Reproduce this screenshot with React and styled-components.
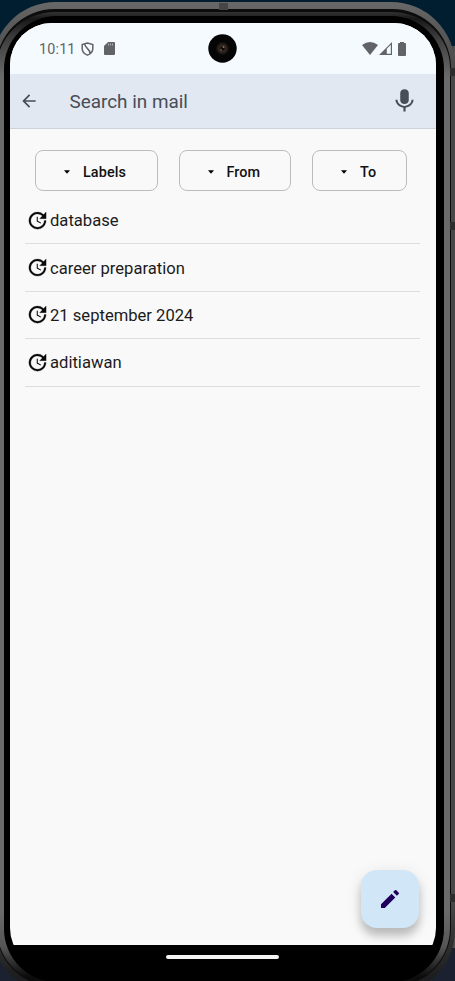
import React from "react";
import styled, { createGlobalStyle } from "styled-components";

const Global = createGlobalStyle`
  * { box-sizing: border-box; }
  body { margin: 0; background: #011e31; font-family: Roboto, "Liberation Sans", sans-serif; overflow: hidden; }
`;

const Stage = styled.main`
  position: relative;
  width: 455px;
  height: 981px;
  overflow: hidden;
  background: linear-gradient(#011e31 0, #011e31 100px, #1c2131 900px);
`;

const SideRail = styled.div`
  position: absolute;
  right: 0;
  top: 46px;
  width: 4px;
  height: 902px;
  background: linear-gradient(90deg, #3c3c3c, #555);
`;

const SideKey = styled.div`
  position: absolute;
  right: 0;
  top: ${(p) => p.$top}px;
  width: 5px;
  height: 8px;
  background: #2c2c2c;
`;

const Shell = styled.div`
  position: absolute;
  top: 2px;
  left: -8px;
  width: 463px;
  height: 992px;
  border-radius: 64px;
  padding: 21px 0 0 18px;
  background: linear-gradient(#686868 0, #5c5c5c 20px, #484848 70px, #484848 900px, #1d1d1d 975px);
`;

const Rim = styled.div`
  position: absolute;
  inset: 7px 4px 7px 4px;
  border: 1.5px solid #0c0c0c;
  border-top-width: 3px;
  border-radius: 59px;
  background: linear-gradient(#333 0, #181818 7px, #3c3c3c 25px, #6a6a6a 65px, #6a6a6a 900px, #555 935px, #0b0b0b 965px);
`;

const Bezel = styled.div`
  position: absolute;
  inset: 14px 11px 12px 12px;
  border-radius: 53px;
  background: #000;
`;

const AntennaBand = styled.div`
  position: absolute;
  top: 1px;
  left: 227px;
  width: 9px;
  height: 7px;
  background: #464646;
`;

const Screen = styled.div`
  position: relative;
  display: flex;
  flex-direction: column;
  width: 426px;
  height: 922px;
  overflow: hidden;
  clip-path: inset(0 0 -25px 0 round 42px);
  background: #f9f9f9;
`;

const StatusBar = styled.header`
  display: flex;
  align-items: center;
  height: 51px;
  padding: 0 29px;
  background: #f5faff;
  color: #626367;
`;

const Clock = styled.span`
  width: 42px;
  font-size: 14.3px;
  letter-spacing: 0.2px;
  line-height: 20px;
`;

const StatusGroup = styled.div`
  display: flex;
  align-items: center;
  gap: ${(p) => p.$gap}px;
  margin-left: ${(p) => (p.$end ? "auto" : "0")};
`;

const Camera = styled.svg`
  position: absolute;
  top: 11px;
  left: 198px;
`;

const SearchBar = styled.div`
  display: flex;
  align-items: center;
  height: 55px;
  padding: 0 16px 0 9px;
  background: #e1e8f2;
  border-bottom: 1px solid #cdd1d8;
  color: #484d57;
`;

const SearchText = styled.span`
  flex: 1;
  margin-left: 30.5px;
  padding-top: 2px;
  font-size: 18.9px;
  line-height: 24px;
`;

const Filters = styled.div`
  display: flex;
  gap: 21px;
  padding: 21px 25px 0;
`;

const Chip = styled.button`
  display: flex;
  flex: none;
  align-items: center;
  width: ${(p) => p.$width}px;
  height: 41px;
  padding: 4px 0 0 28px;
  gap: 13px;
  border: 1px solid #bdbdbd;
  border-radius: 8px;
  background: transparent;
  color: #111;
  font: 500 14.4px/20px Roboto, sans-serif;
  letter-spacing: 0.1px;
`;

const Caret = styled.svg`
  flex: none;
  margin-top: -1px;
`;

const History = styled.ul`
  display: flex;
  flex-direction: column;
  margin: 6px 16px 0 15px;
  padding: 0;
  list-style: none;
`;

const HistoryRow = styled.li`
  display: flex;
  align-items: center;
  height: 47.4px;
  padding-left: 1px;
  gap: 1px;
  border-bottom: 1px solid #dedede;
  color: #1b1b1b;
  font-size: 16.6px;
  line-height: 20px;
`;

const RowIcon = styled.svg`
  flex: none;
  color: #0a0a0a;
  stroke: currentColor;
  stroke-width: 0.25px;
`;

const RowLabel = styled.span`
  padding-top: 2px;
`;

const Compose = styled.button`
  position: absolute;
  right: 17px;
  bottom: 17px;
  display: grid;
  place-items: center;
  width: 58px;
  height: 58px;
  padding: 0;
  border: 0;
  border-radius: 16px;
  background: #d1e6f6;
  color: #21005d;
  box-shadow: 0 8px 9px rgba(0, 0, 0, 0.2), 0 3px 16px rgba(0, 0, 0, 0.1);
`;

const HomeBar = styled.div`
  position: relative;
  width: 113px;
  height: 4px;
  margin: 10px 0 0 156px;
  border-radius: 2px;
  background: #f4f4f4;
`;

const paths = {
  back: "M20 11H7.83l5.59-5.59L12 4l-8 8 8 8 1.41-1.41L7.83 13H20v-2z",
  mic: "M12 14.6c1.9 0 3.3-1.34 3.3-3.2V5c0-1.76-1.4-3.1-3.3-3.1S8.7 3.24 8.7 5v6.4c0 1.86 1.4 3.2 3.3 3.2zm5.4-3.6c0 3-2.6 5.2-5.4 5.2S6.6 14 6.6 11H5c0 3.41 2.72 6.23 6.15 6.72V21h1.7v-3.28c3.43-.48 6.15-3.3 6.15-6.72h-1.6z",
  update: "M21 10.12h-6.78l2.74-2.82c-2.73-2.7-7.15-2.8-9.88-.1-2.73 2.71-2.73 7.08 0 9.79s7.15 2.71 9.88 0C18.32 15.65 19 14.08 19 12.1h2c0 1.98-.88 4.55-2.64 6.29-3.51 3.48-9.21 3.48-12.72 0-3.5-3.47-3.53-9.11-.02-12.58s9.14-3.47 12.65 0L21 3v7.12z",
  hands: "M12.3 8v4.25l3.5 2.08-.5.9L11.2 13V8h1.1z",
  pencil: "M3 17.25V21h3.75L17.3 10.45l-3.75-3.75L3 17.25zM20.71 7.04a1 1 0 0 0 0-1.41l-2.34-2.34a1 1 0 0 0-1.41 0l-1.83 1.83 3.75 3.75 1.83-1.83z",
};

const filters = [
  { label: "Labels", width: 122.5 },
  { label: "From", width: 112.5 },
  { label: "To", width: 95 },
];
const searches = ["database", "career preparation", "21 september 2024", "aditiawan"];

export default function App() {
  return (
    <Stage>
      <Global />
      <SideRail />
      <Shell>
        <Rim />
        <Bezel />
        <AntennaBand />
        <Screen>
          <StatusBar>
            <Clock>10:11</Clock>
            <StatusGroup $gap={10}>
              <svg width="13" height="14" viewBox="0 0 13 14" fill="none" stroke="currentColor" strokeWidth="1.5">
                <path d="M6.5 1 1.2 2.6v3.8c0 3.2 2.2 5.5 5.3 6.7 3.1-1.2 5.3-3.5 5.3-6.7V2.6zM3.8 2.3c0 3.7 5.3 4.6 5.3 9" />
              </svg>
              <svg width="11" height="13" viewBox="0 0 11 13" fill="currentColor">
                <path d="M4 0h6q1 0 1 1v11q0 1-1 1H1q-1 0-1-1V4z" />
                <path d="M4.5 1.5v2m2-2v2m2-2v2" stroke="#b4b6ba" strokeWidth="0.9" />
              </svg>
            </StatusGroup>
            <StatusGroup $gap={0.5} $end>
              <svg width="16" height="13" viewBox="0 0 16 13" fill="currentColor">
                <path d="M0 3Q8-3 16 3L8 13z" />
              </svg>
              <svg width="14" height="13" viewBox="0 0 14 13" fill="currentColor">
                <path fillRule="evenodd" d="M13 0v13H0zM7.8 6.8v5H11.8V2.8z" />
              </svg>
              <svg width="14" height="14" viewBox="0 0 14 14" fill="currentColor">
                <path d="M7 0h4v1H12q1 0 1 1v11q0 1-1 1H6q-1 0-1-1V2q0-1 1-1h1z" />
              </svg>
            </StatusGroup>
          </StatusBar>
          <Camera width="29" height="29" viewBox="0 0 29 29">
            <circle cx="14.5" cy="14.5" r="14.2" fill="#050505" />
            <circle cx="14.5" cy="14.5" r="6.5" fill="#171314" />
            <circle cx="14.5" cy="14.5" r="4.8" fill="#30241f" />
            <circle cx="14.5" cy="14.5" r="2" fill="#090909" />
            <circle cx="15.5" cy="13" r="1" fill="#8b7461" />
            <circle cx="13" cy="16" r="1" fill="#66503f" />
          </Camera>
          <SearchBar>
            <svg width="20" height="20" viewBox="0 0 24 24" fill="currentColor"><path d={paths.back} /></svg>
            <SearchText>Search in mail</SearchText>
            <svg width="31" height="28" viewBox="0 0 24 24" preserveAspectRatio="none" fill="currentColor">
              <path d={paths.mic} />
            </svg>
          </SearchBar>
          <Filters>
            {filters.map((f) => (
              <Chip key={f.label} $width={f.width}>
                <Caret width="6" height="4" viewBox="0 0 6 4"><path d="M0 .3h6L3 3.7z" /></Caret>
                {f.label}
              </Chip>
            ))}
          </Filters>
          <History>
            {searches.map((s) => (
              <HistoryRow key={s}>
                <RowIcon width="23" height="23" viewBox="0 0 24 24" fill="currentColor">
                  <path d={paths.update} />
                  <path d={paths.hands} stroke="none" />
                </RowIcon>
                <RowLabel>{s}</RowLabel>
              </HistoryRow>
            ))}
          </History>
          <Compose aria-label="Compose">
            <svg width="24" height="24" viewBox="0 0 24 24" fill="currentColor"><path d={paths.pencil} /></svg>
          </Compose>
        </Screen>
        <HomeBar />
      </Shell>
      <SideKey $top={68} />
      <SideKey $top={222} />
      <SideKey $top={894} />
    </Stage>
  );
}
